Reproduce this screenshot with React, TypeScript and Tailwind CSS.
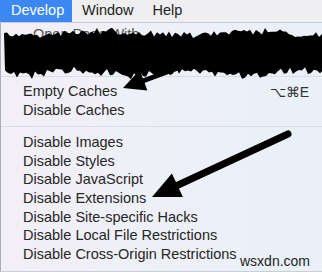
import React, { FC } from "react";

// jagged edge for the black redaction band
const jag = (seed: number) => {
  const x = Math.sin(seed * 12.9898) * 43758.5453;
  return x - Math.floor(x);
};

const bandPoints = (): string => {
  const top: string[] = [];
  const bottom: string[] = [];
  for (let x = 4; x <= 326; x += 3) {
    const t = 33 + (jag(x + 1) - 0.5) * 7 + Math.sin(x / 23) * 2;
    top.push(`${x},${t.toFixed(1)}`);
  }
  for (let x = 326; x >= 4; x -= 3) {
    const b = 73 + (jag(x + 77) - 0.5) * 8 + Math.sin(x / 17) * 2.5;
    bottom.push(`${x},${b.toFixed(1)}`);
  }
  return [...top, ...bottom].join(" ");
};

const Row: FC<{ label: string; shortcut?: string }> = ({ label, shortcut }) => (
  <div className="h-[18.67px] flex items-center justify-between pl-[22px] pr-[13px] text-[14.5px] text-[#262626]">
    <span>{label}</span>
    {shortcut && <span className="text-[14px] text-[#333]">{shortcut}</span>}
  </div>
);

const Separator: FC = () => <div className="h-px bg-[#d8dce6]" />;

const App: FC = () => {
  const disables = [
    "Disable Images",
    "Disable Styles",
    "Disable JavaScript",
    "Disable Extensions",
    "Disable Site-specific Hacks",
    "Disable Local File Restrictions",
    "Disable Cross-Origin Restrictions",
  ];
  return (
    <div className="relative w-[322px] h-[272px] overflow-hidden font-['Liberation_Sans',Arial,sans-serif]">
      <div className="h-[22px] flex items-center bg-[#efeff1] text-[14.5px] text-[#222]">
        <div className="h-full w-[72px] bg-[#3b88f5] text-white flex items-center pl-[11px]">
          Develop
        </div>
        <div className="pl-[10px]">Window</div>
        <div className="pl-[19px]">Help</div>
      </div>
      <div className="h-px bg-[#c6cdd9]" />
      <div className="h-[249px] border-l border-[#a9adb6] border-b border-b-[#c9ced8] bg-gradient-to-r from-[#f3eff6] via-[#eef0f8] to-[#e9f0f8]">
        <div className="h-[53px] pt-[1px]">
          <div className="pl-[32px] text-[14.5px] text-[#555]">Open Page With</div>
        </div>
        <Separator />
        <div className="h-[6px]" />
        <Row label="Empty Caches" shortcut="⌥⌘E" />
        <Row label="Disable Caches" />
        <div className="h-[6px]" />
        <Separator />
        <div className="h-[6.33px]" />
        {disables.map((d) => (
          <Row key={d} label={d} />
        ))}
      </div>

      <svg
        className="absolute inset-0 pointer-events-none"
        width="322"
        height="272"
        viewBox="0 0 322 272"
      >
        <polygon points={bandPoints()} fill="#000" />
        <line x1="186" y1="65" x2="140" y2="82" stroke="#000" strokeWidth="5" strokeLinecap="round" />
        <polygon points="123,88 139.8,70 147.4,90.6" fill="#000" />
        <line x1="288" y1="134" x2="176" y2="186" stroke="#000" strokeWidth="7" strokeLinecap="round" />
        <polygon points="152,197 171.9,173.4 182.9,197" fill="#000" />
      </svg>

      <div className="absolute left-[240px] top-[251px] text-[14px] text-[#1e1e1e]">
        wsxdn.com
      </div>
    </div>
  );
};

export default App;
